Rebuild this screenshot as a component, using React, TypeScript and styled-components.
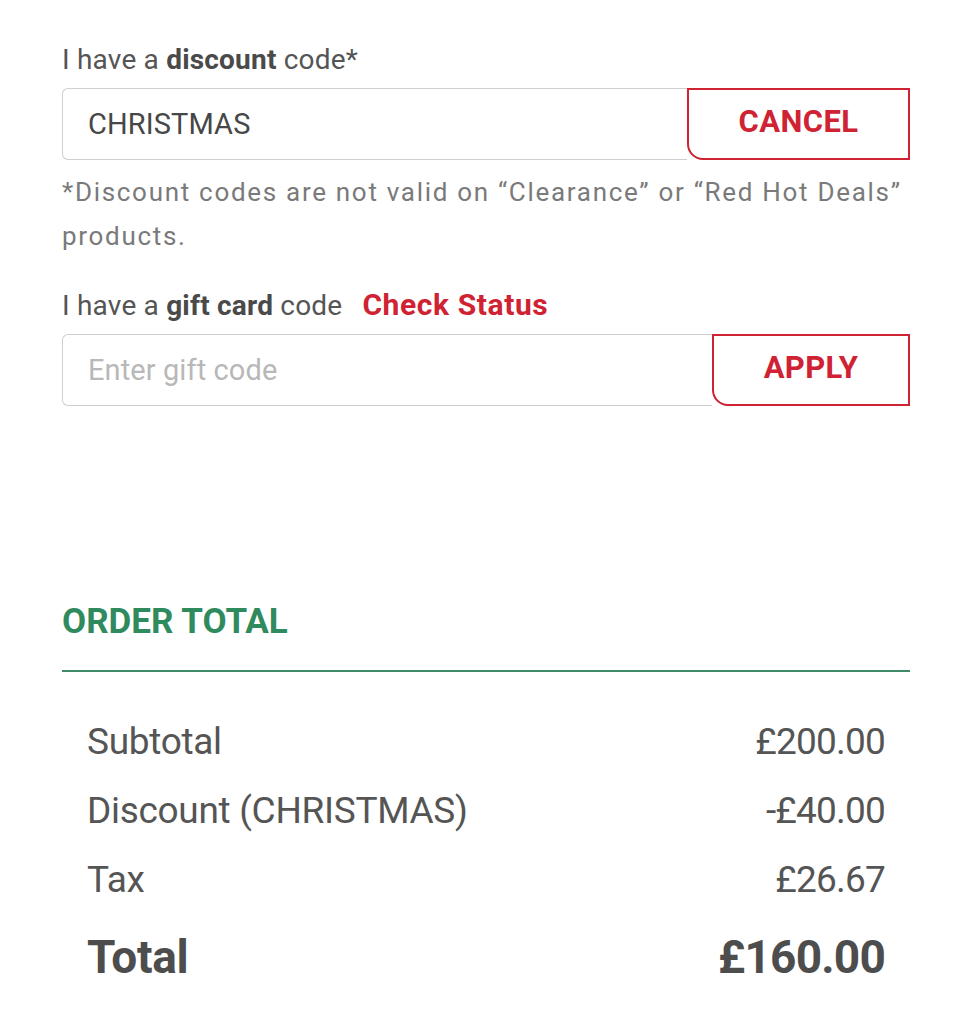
import React from 'react';
import styled, { createGlobalStyle } from 'styled-components';

const red = '#cf2233';
const green = '#2f8a5e';
const text = '#555555';

const GlobalStyle = createGlobalStyle`
  html, body {
    margin: 0;
    padding: 0;
    background: #ffffff;
  }
  body {
    font-family: Roboto, 'Liberation Sans', Arial, sans-serif;
    color: ${text};
  }
`;

const Page = styled.main`
  width: 848px;
  padding: 44px 62px 40px;
  display: flex;
  flex-direction: column;
`;

const Label = styled.label<{ $top?: number }>`
  display: block;
  font-size: 28px;
  line-height: 32px;
  color: ${text};
  letter-spacing: 0.2px;
  margin-top: ${p => p.$top ?? 0}px;

  b {
    font-weight: 700;
    color: #4a4a4a;
  }
`;

const Link = styled.a`
  color: ${red};
  font-weight: 700;
  font-size: 30px;
  margin-left: 20px;
  text-decoration: none;
  letter-spacing: 0.6px;
`;

const Field = styled.div`
  display: flex;
  height: 72px;
  margin-top: 12px;
`;

const Input = styled.input`
  flex: 1;
  min-width: 0;
  box-sizing: border-box;
  height: 100%;
  border: 1px solid #cfcfcf;
  border-right: none;
  border-radius: 6px 0 0 6px;
  padding: 0 25px;
  font-family: Roboto, 'Liberation Sans', Arial, sans-serif;
  font-size: 29px;
  color: #474747;
  outline: none;
  background: #fff;
  letter-spacing: 0.1px;

  &::placeholder {
    color: #b8b8b8;
  }
`;

const Button = styled.button<{ $width: number }>`
  width: ${p => p.$width}px;
  height: 100%;
  box-sizing: border-box;
  border: 2px solid ${red};
  border-radius: 0 0 0 16px;
  background: #fff;
  color: ${red};
  font-family: Roboto, 'Liberation Sans', Arial, sans-serif;
  font-weight: 700;
  font-size: 31px;
  letter-spacing: 0.4px;
  padding: 0 0 6px;
`;

const Note = styled.p`
  margin: 10px 0 0;
  font-size: 26px;
  line-height: 44px;
  color: #7a7a7a;
  letter-spacing: 1.7px;
`;

const Heading = styled.h2`
  margin: 196px 0 0;
  padding-bottom: 28px;
  border-bottom: 2px solid #3f8a69;
  font-size: 35px;
  line-height: 40px;
  font-weight: 700;
  color: ${green};
  letter-spacing: 0;
`;

const Summary = styled.dl`
  margin: 35px 0 0;
  padding: 0 25px;
`;

const Row = styled.div<{ $total?: boolean }>`
  display: flex;
  justify-content: space-between;
  align-items: center;
  height: ${p => (p.$total ? 86 : 69)}px;
  font-size: ${p => (p.$total ? 46 : 37)}px;
  font-weight: ${p => (p.$total ? 700 : 400)};
  color: ${p => (p.$total ? '#4d4d4d' : text)};
  letter-spacing: ${p => (p.$total ? -0.3 : -0.3)}px;

  dt, dd {
    margin: 0;
  }
`;

const Amount = styled.dd`
  letter-spacing: -0.8px;
`;

const rows = [
  { label: 'Subtotal', value: '£200.00' },
  { label: 'Discount (CHRISTMAS)', value: '-£40.00' },
  { label: 'Tax', value: '£26.67' },
];

export default function App() {
  return (
    <>
      <GlobalStyle />
      <Page>
        <Label>
          I have a <b>discount</b> code*
        </Label>
        <Field>
          <Input defaultValue="CHRISTMAS" />
          <Button $width={223}>CANCEL</Button>
        </Field>
        <Note>
          *Discount codes are not valid on “Clearance” or “Red Hot Deals” products.
        </Note>

        <Label $top={31}>
          I have a <b>gift card</b> code
          <Link href="#">Check Status</Link>
        </Label>
        <Field>
          <Input placeholder="Enter gift code" />
          <Button $width={198}>APPLY</Button>
        </Field>

        <Heading>ORDER TOTAL</Heading>
        <Summary>
          {rows.map(r => (
            <Row key={r.label}>
              <dt>{r.label}</dt>
              <Amount>{r.value}</Amount>
            </Row>
          ))}
          <Row $total>
            <dt>Total</dt>
            <Amount>£160.00</Amount>
          </Row>
        </Summary>
      </Page>
    </>
  );
}
